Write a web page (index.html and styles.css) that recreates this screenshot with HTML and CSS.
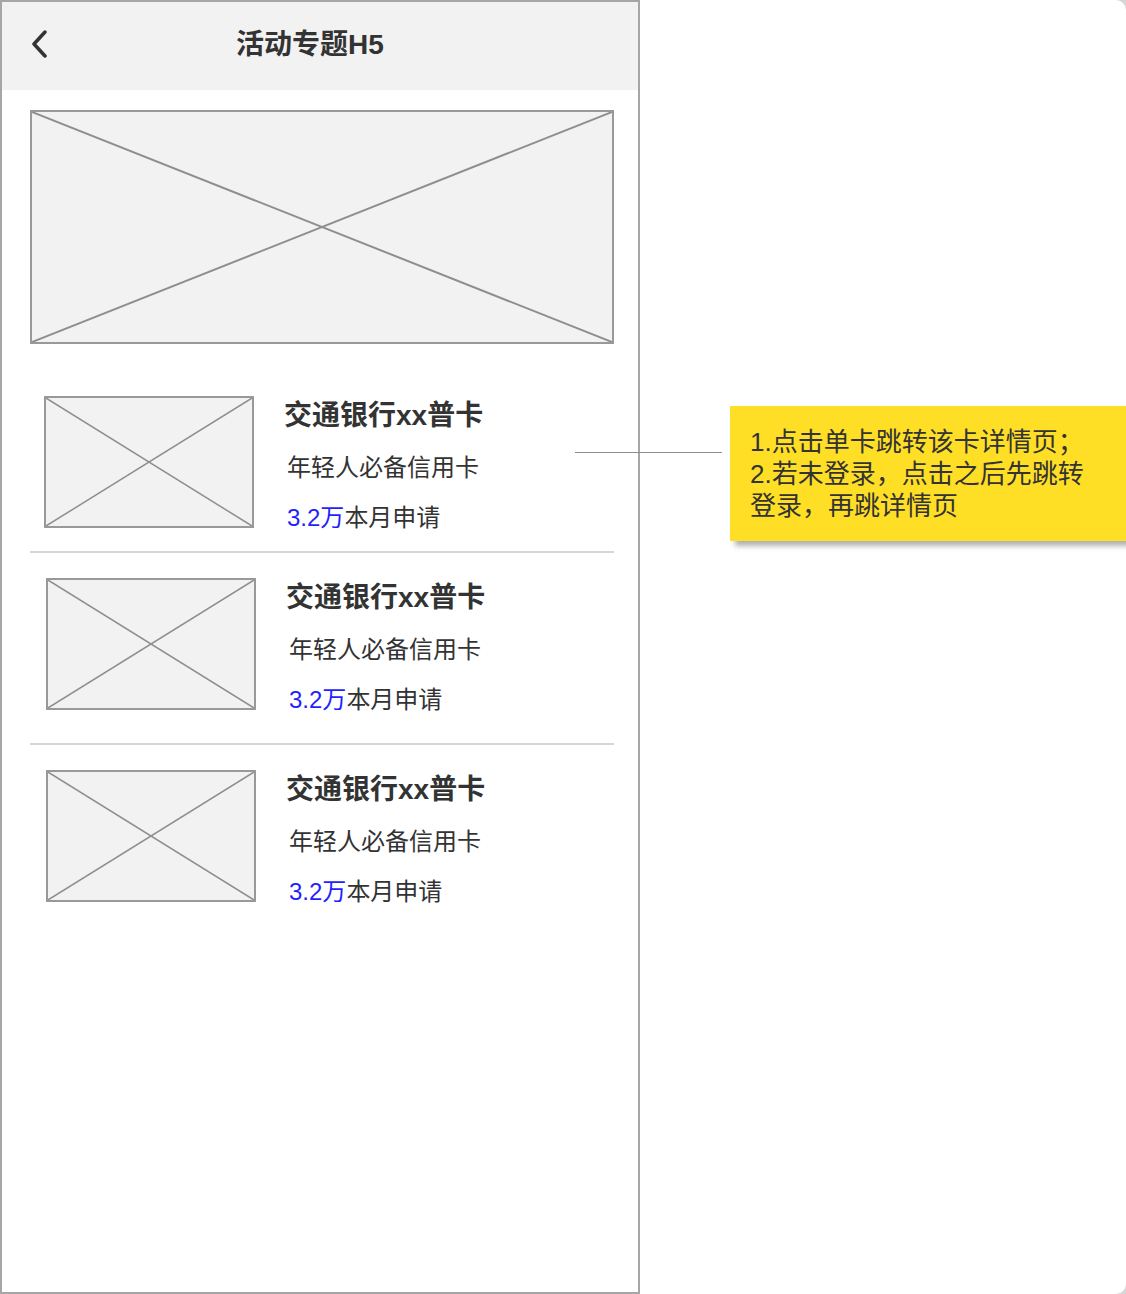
FILE: index.html
```html
<!DOCTYPE html>
<html lang="zh-CN">
<head>
  <meta charset="UTF-8">
  <meta name="viewport" content="width=device-width, initial-scale=1.0">
  <title>活动专题H5</title>
  <link rel="stylesheet" href="styles.css">
</head>
<body>
  <div class="canvas">
    <!-- Phone frame -->
    <div class="phone">
      <header class="topbar">
        <svg class="back" viewBox="0 0 18 28" width="18" height="28">
          <polyline points="15,2 4,14 15,26" />
        </svg>
        <h1 class="topbar-title">活动专题H5</h1>
      </header>

      <div class="content">
        <div class="placeholder hero">
          <svg viewBox="0 0 100 100" preserveAspectRatio="none">
            <line x1="0" y1="0" x2="100" y2="100" />
            <line x1="100" y1="0" x2="0" y2="100" />
          </svg>
        </div>

        <ul class="card-list">
          <li class="card card-first">
            <div class="placeholder thumb">
              <svg viewBox="0 0 100 100" preserveAspectRatio="none">
                <line x1="0" y1="0" x2="100" y2="100" />
                <line x1="100" y1="0" x2="0" y2="100" />
              </svg>
            </div>
            <div class="card-info">
              <div class="card-title">交通银行xx普卡</div>
              <div class="card-desc">年轻人必备信用卡</div>
              <div class="card-meta"><span class="count">3.2万</span>本月申请</div>
            </div>
          </li>
          <li class="card card-mid">
            <div class="placeholder thumb">
              <svg viewBox="0 0 100 100" preserveAspectRatio="none">
                <line x1="0" y1="0" x2="100" y2="100" />
                <line x1="100" y1="0" x2="0" y2="100" />
              </svg>
            </div>
            <div class="card-info">
              <div class="card-title">交通银行xx普卡</div>
              <div class="card-desc">年轻人必备信用卡</div>
              <div class="card-meta"><span class="count">3.2万</span>本月申请</div>
            </div>
          </li>
          <li class="card card-last">
            <div class="placeholder thumb">
              <svg viewBox="0 0 100 100" preserveAspectRatio="none">
                <line x1="0" y1="0" x2="100" y2="100" />
                <line x1="100" y1="0" x2="0" y2="100" />
              </svg>
            </div>
            <div class="card-info">
              <div class="card-title">交通银行xx普卡</div>
              <div class="card-desc">年轻人必备信用卡</div>
              <div class="card-meta"><span class="count">3.2万</span>本月申请</div>
            </div>
          </li>
        </ul>
      </div>
    </div>

    <!-- Annotation -->
    <div class="notes">
      <div class="note">
        1.点击单卡跳转该卡详情页；<br>
        2.若未登录，点击之后先跳转<br>
        登录，再跳详情页
      </div>
    </div>
    <div class="connector"></div>
  </div>
</body>
</html>
```

FILE: styles.css
```css
html {
  background-color: #d6d6d6;
}
body {
  margin: 0;
  padding: 0;
  font-family: 'Liberation Sans', 'Noto Sans CJK SC', sans-serif;
  color: #333;
}
.canvas {
  position: relative;
  display: flex;
  width: 1126px;
  height: 1294px;
  background: #ffffff;
  border-radius: 0 10px 10px 0;
  overflow: hidden;
}

/* Phone frame */
.phone {
  box-sizing: border-box;
  width: 640px;
  height: 1294px;
  border: 2px solid #a6a6a6;
  background: #ffffff;
  flex-shrink: 0;
}
.topbar {
  display: flex;
  align-items: center;
  height: 84px;
  padding: 0 66px 4px 28px;
  background-color: #f2f2f2;
}
.back {
  flex-shrink: 0;
  fill: none;
  stroke: #333;
  stroke-width: 3.5;
  stroke-linecap: round;
  stroke-linejoin: round;
}
.topbar-title {
  flex: 1;
  margin: 0 0 4px;
  text-align: center;
  font-size: 28px;
  font-weight: bold;
  color: #333;
}
.content {
  padding: 20px 24px 0 28px;
}

/* Image placeholders */
.placeholder {
  box-sizing: border-box;
  border: 2px solid #999;
  background: #f2f2f2;
}
.placeholder svg {
  display: block;
  width: 100%;
  height: 100%;
}
.placeholder line {
  stroke: #8e8e8e;
  stroke-width: 2;
  vector-effect: non-scaling-stroke;
}
.hero {
  height: 234px;
}
.thumb {
  width: 210px;
  height: 132px;
  flex-shrink: 0;
}
.thumb line {
  stroke-width: 1.5;
}

/* Card list */
.card-list {
  list-style: none;
  margin: 52px 0 0;
  padding: 0;
}
.card {
  display: flex;
  align-items: flex-start;
  padding: 25px 0 33px 16px;
  border-bottom: 2px solid #d7d7d7;
}
.card-first {
  padding-top: 0;
  padding-bottom: 23px;
  padding-left: 14px;
}
.card-last {
  border-bottom: none;
}
.card-info {
  height: 132px;
  margin-left: 30px;
}
.card-title {
  margin-top: 5px;
  font-size: 28px;
  line-height: 30px;
  font-weight: bold;
}
.card-desc {
  margin-top: 22px;
  padding-left: 3px;
  font-size: 24px;
  line-height: 30px;
}
.card-meta {
  margin-top: 20px;
  padding-left: 3px;
  font-size: 24px;
  line-height: 30px;
}
.count {
  color: #1f1fff;
}

/* Annotation */
.notes {
  flex: 1;
  padding: 406px 0 0 90px;
}
.note {
  padding: 20px 20px 19px;
  background-color: #ffdf25;
  font-size: 26px;
  line-height: 32px;
  color: #333;
  box-shadow: 5px 5px 5px rgba(0, 0, 0, 0.3);
  white-space: nowrap;
}
.connector {
  position: absolute;
  left: 575px;
  top: 452px;
  width: 147px;
  height: 1px;
  background-color: #8e8e8e;
}
```
